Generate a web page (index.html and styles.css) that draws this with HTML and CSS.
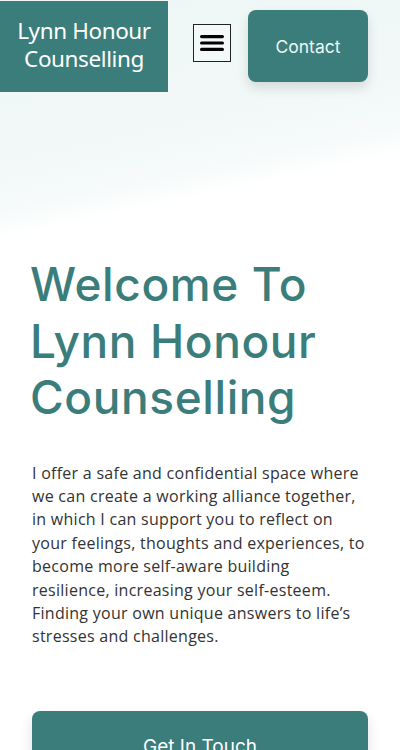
FILE: index.html
```html
<!DOCTYPE html>
<html lang="en">
<head>
<meta charset="utf-8">
<title>Lynn Honour Counselling</title>
<link rel="stylesheet" href="styles.css">
</head>
<body>
<div class="page">
  <header class="header">
    <div class="logo">Lynn Honour<br>Counselling</div>
    <button class="menu" aria-label="Menu">
      <svg width="24" height="18" viewBox="0 0 24 18"><rect x="0" y="1" width="24" height="3.2" rx="1.6" fill="#000"/><rect x="0" y="7.4" width="24" height="3.2" rx="1.6" fill="#000"/><rect x="0" y="13.8" width="24" height="3.2" rx="1.6" fill="#000"/></svg>
    </button>
    <a class="contact" href="#">Contact</a>
  </header>
  <main class="hero">
    <h1 class="title">Welcome To Lynn Honour Counselling</h1>
    <p class="intro">I offer a safe and confidential space where we can create a working alliance together, in which I can support you to reflect on your feelings, thoughts and experiences, to become more self-aware building resilience, increasing your self-esteem. Finding your own unique answers to life’s stresses and challenges.</p>
    <a class="cta" href="#">Get In Touch</a>
  </main>
</div>
</body>
</html>
```
FILE: styles.css
```css
* { box-sizing: border-box; }
html, body { margin: 0; padding: 0; }
body {
  font-family: "Open Sans", "Noto Sans", sans-serif;
  background: #fff;
  width: 400px;
  height: 750px;
  overflow: hidden;
}
.page {
  background: linear-gradient(168deg, #eef6f6 0px, #f2f8f8 160px, #f6fafa 205px, #ffffff 235px);
  min-height: 750px;
}
.header {
  display: flex;
  align-items: center;
  height: 92px;
}
.logo {
  width: 168px;
  height: 91px;
  background: #3a7d7b;
  color: #fff;
  font-family: "Noto Sans", sans-serif;
  font-size: 22.5px;
  line-height: 28px;
  text-align: center;
  display: flex;
  align-items: center;
  justify-content: center;
  letter-spacing: -0.4px;
  padding-bottom: 2px;
}
.menu {
  margin-left: 25px;
  width: 38px;
  height: 38px;
  border: 1px solid #222;
  background: #f3f9f9;
  display: flex;
  align-items: center;
  justify-content: center;
  padding: 0;
  margin-top: -6px;
}
.contact {
  margin-left: 17px;
  width: 120px;
  height: 72px;
  background: #3a7d7b;
  color: #eef7f6;
  border-radius: 8px;
  display: flex;
  align-items: center;
  justify-content: center;
  font-family: "Inter", sans-serif;
  font-size: 17.5px;
  text-decoration: none;
  box-shadow: 0 6px 12px rgba(0,0,0,0.12);
}
.hero {
  padding: 164px 32px 0 32px;
}
.title {
  margin: 0;
  color: #3a7d7b;
  font-family: "Inter", sans-serif;
  font-weight: 500;
  font-size: 46px;
  line-height: 56.5px;
  letter-spacing: 0.6px;
  margin-left: -2px;
}
.intro {
  margin: 36px 0 0 0;
  color: #333;
  font-family: "Open Sans", sans-serif;
  font-size: 16px;
  line-height: 23.4px;
  letter-spacing: 0.27px;
}
.cta {
  margin-top: 62px;
  display: flex;
  justify-content: center;
  align-items: center;
  height: 72px;
  background: #3a7d7b;
  color: #fff;
  border-radius: 8px;
  font-family: "Inter", sans-serif;
  font-size: 19px;
  text-decoration: none;
  box-shadow: 0 6px 14px rgba(0,0,0,0.12);
}
```
